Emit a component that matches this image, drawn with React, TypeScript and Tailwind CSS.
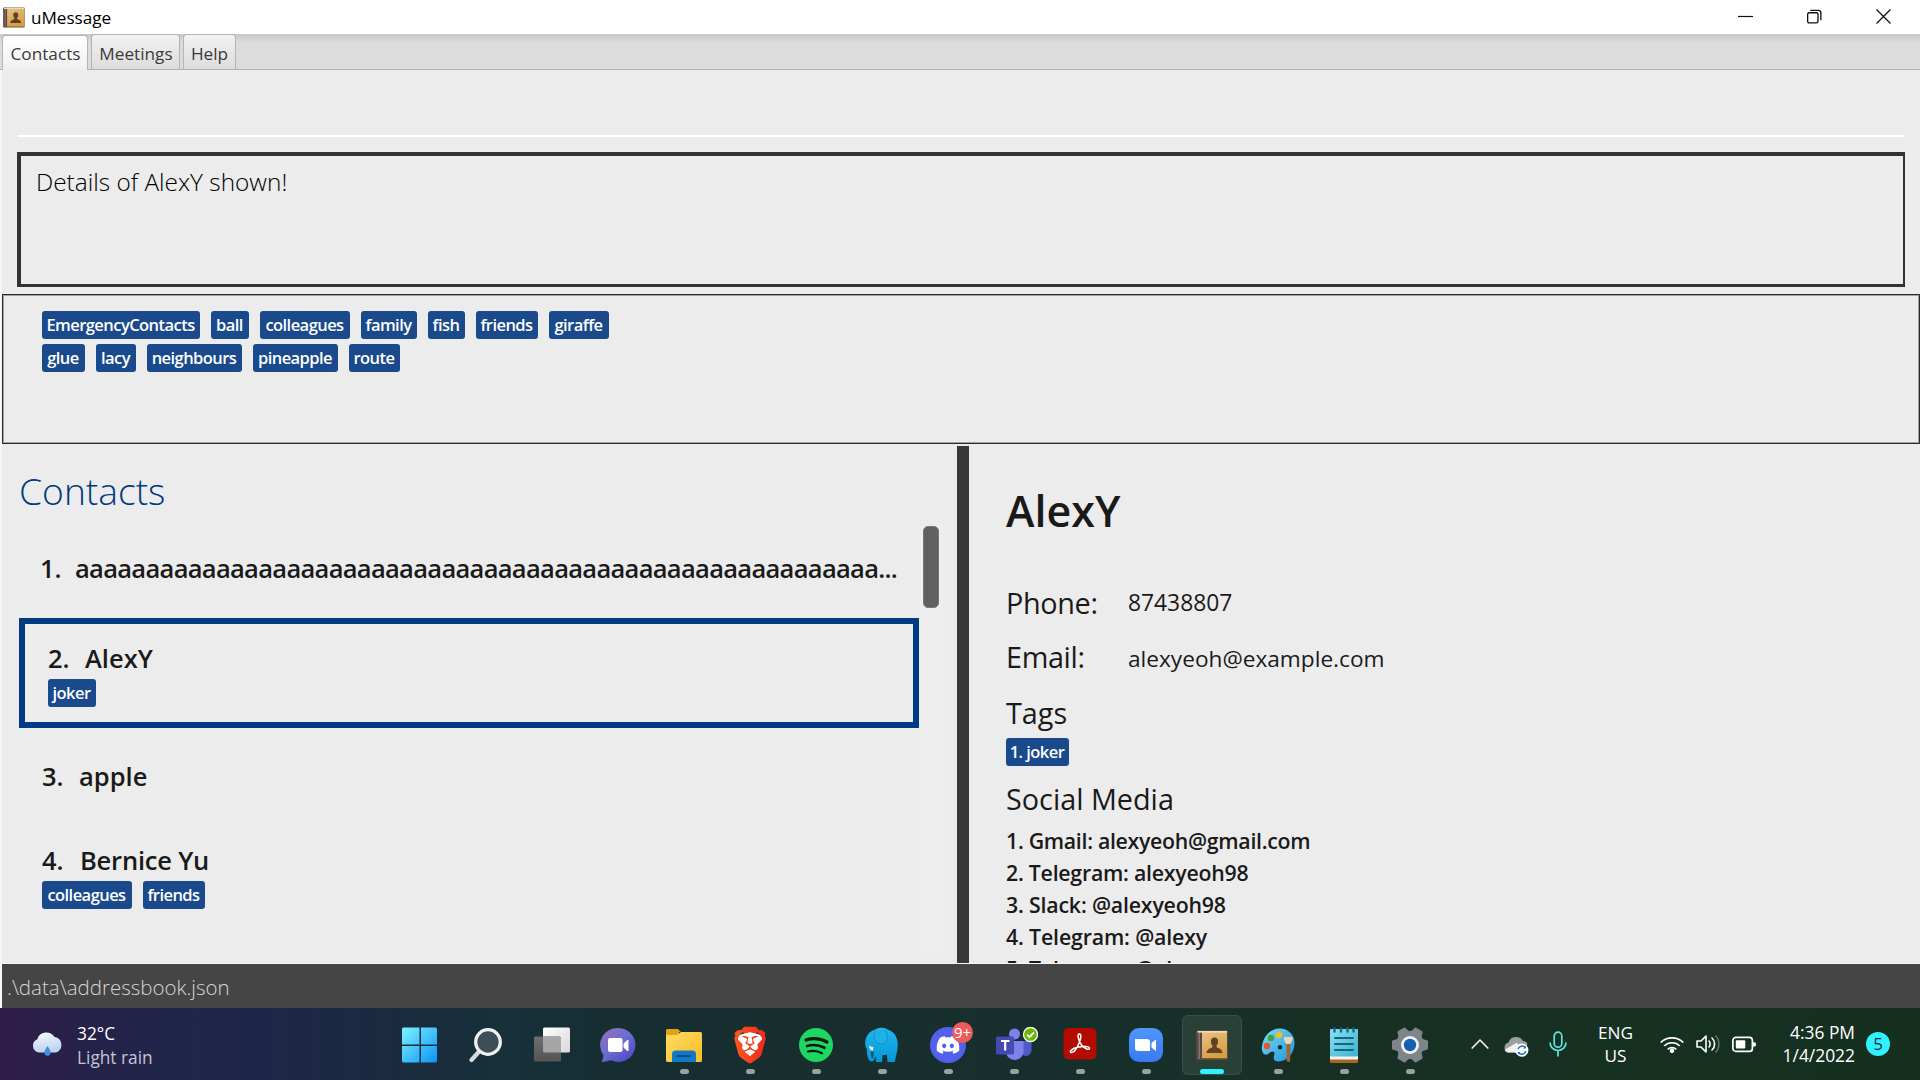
import type { ReactNode } from "react";
import { SiBrave, SiDiscord } from "react-icons/si";

function Tag({ label, width }: { label: string; width: string }) {
  return (
    <span
      className={`flex h-7 items-center justify-center rounded-[3px] bg-[#1a4a8c] pr-px text-[16.5px] font-semibold leading-7 tracking-[-0.55px] whitespace-nowrap text-white ${width}`}
    >
      {label}
    </span>
  );
}

function BookIcon({ className }: { className?: string }) {
  return (
    <svg viewBox="0 0 32 30" className={className}>
      <defs>
        <linearGradient id="bookCover" x1="0" y1="0" x2="0.4" y2="1">
          <stop offset="0" stopColor="#e6c184" />
          <stop offset="1" stopColor="#d79f45" />
        </linearGradient>
      </defs>
      <rect x="0.5" y="0.5" width="31" height="29" rx="1" fill="#7b5a33" />
      <rect x="0.5" y="1" width="5.5" height="28" fill="#5a4744" />
      <rect x="2.5" y="2" width="1.6" height="27" fill="#86736d" />
      <rect x="6" y="2" width="25" height="26" fill="url(#bookCover)" />
      <rect x="1.5" y="1" width="29.5" height="1.6" fill="#f0dcb8" />
      <path
        d="M18.5 7.5c2.5 0 3.8 1.8 3.6 4.4-.2 1.9-.9 3-1.6 3.8v1.6c1.5.9 5.5 1.5 6 5.7H10.5c.5-4.2 4.5-4.8 6-5.7v-1.6c-.7-.8-1.4-1.9-1.6-3.8-.2-2.6 1.1-4.4 3.6-4.4z"
        fill="#5f4322"
      />
    </svg>
  );
}

function TitleBar() {
  return (
    <header className="flex h-[34px] items-center bg-white pl-[3px] pr-[29px] text-black">
      <BookIcon className="h-[21px] w-[22px]" />
      <span className="ml-[6px] pt-[2px] text-[17.1px] leading-[30px]">uMessage</span>
      <div className="ml-auto flex gap-[54px] pb-px">
        <svg width="15" height="15" viewBox="0 0 15 15">
          <path d="M0 7.5h15" stroke="#111" strokeWidth="1.2" />
        </svg>
        <svg width="15" height="15" viewBox="0 0 16 15" fill="none" stroke="#111" strokeWidth="1.4">
          <rect x="0.7" y="3.5" width="11" height="10.8" rx="1.5" />
          <path d="M3.500 1h8.500a2.800 2.800 0 0 1 2.800 2.800v7.700" />
        </svg>
        <svg width="15" height="15" viewBox="0 0 15 15">
          <path d="M0.5 0.5l14 14M14.5 0.5l-14 14" stroke="#111" strokeWidth="1.3" />
        </svg>
      </div>
    </header>
  );
}

function TabBar() {
  const base =
    "flex h-[35px] items-center justify-center rounded-t-[4px] border border-b-0 border-[#b4b4b4] text-[17.2px] leading-[30px] text-[#3a3a3a]";
  return (
    <nav className="flex h-9 items-end border-b border-[#b2b2b2] bg-linear-to-b from-[#c8c8c8] via-[#dcdcdc] via-25% to-[#dcdcdc] pl-[2px]">
      <div className={`${base} -mb-px h-9 w-[86px] bg-linear-to-b from-white to-[#f0f0f0] pt-[2px] pl-px`}>Contacts</div>
      <div className={`${base} ml-[3px] w-[89px] bg-linear-to-b from-[#f3f3f3] to-[#dcdcdc] pt-[3px] pl-px`}>Meetings</div>
      <div className={`${base} ml-[3px] w-[53px] bg-linear-to-b from-[#f3f3f3] to-[#dcdcdc] pt-[3px]`}>Help</div>
    </nav>
  );
}

const allTags: [string, string][] = [
  ["EmergencyContacts", "w-[158px]"],
  ["ball", "w-[38px]"],
  ["colleagues", "w-[90px]"],
  ["family", "w-[56px]"],
  ["fish", "w-[37px]"],
  ["friends", "w-[62px]"],
  ["giraffe", "w-[60px]"],
  ["glue", "w-[43px]"],
  ["lacy", "w-[40px]"],
  ["neighbours", "w-[95px]"],
  ["pineapple", "w-[85px]"],
  ["route", "w-[51px]"],
];

function ContactsPane() {
  const name = "text-[25.5px] font-semibold leading-9 whitespace-nowrap";
  return (
    <section className="flex w-[955px] flex-col pl-[17px]">
      <h1 className="mt-[27px] h-10 text-[37.2px] font-light leading-10 text-[#003a80]">Contacts</h1>
      <div className="mt-[15px] flex flex-1">
        <div className="w-[900px] text-[#1a1a1a]">
          <div className="flex h-[92px] pl-[21px] pt-6">
            <span className={`${name} w-[35px]`}>1.</span>
            <span className={`${name} tracking-[-0.7px]`}>{"a".repeat(57)}...</span>
          </div>
          <div className="h-[110px] border-6 border-[#003b84] pl-[23px] pt-4">
            <div className="flex">
              <span className={`${name} w-[37px]`}>2.</span>
              <span className={name}>AlexY</span>
            </div>
            <div className="mt-[3px] flex">
              <Tag label="joker" width="w-12" />
            </div>
          </div>
          <div className="flex h-[84px] pl-[23px] pt-[30px]">
            <span className={`${name} w-[37px]`}>3.</span>
            <span className={name}>apple</span>
          </div>
          <div className="pl-[23px] pt-[30px]">
            <div className="flex">
              <span className={`${name} w-[38px]`}>4.</span>
              <span className={`${name} tracking-[-0.2px]`}>Bernice Yu</span>
            </div>
            <div className="mt-[3px] flex gap-[11px]">
              <Tag label="colleagues" width="w-[90px]" />
              <Tag label="friends" width="w-[62px]" />
            </div>
          </div>
        </div>
        <div className="mb-3 w-6 bg-[#eeeeee] pl-1">
          <div className="h-[82px] w-4 rounded-[5px] border border-[#777] bg-[#606060]" />
        </div>
      </div>
    </section>
  );
}

const socials: [string, string][] = [
  ["1. Gmail: alexyeoh@gmail.com", "tracking-[-0.3px]"],
  ["2. Telegram: alexyeoh98", "tracking-[-0.24px]"],
  ["3. Slack: @alexyeoh98", "tracking-[-0.18px]"],
  ["4. Telegram: @alexy", "tracking-[-0.15px]"],
  ["5. Telegram: @alexy", "tracking-[-0.15px]"],
];

function DetailsPane() {
  const label = "text-[28.8px] leading-10";
  return (
    <section className="flex-1 pl-[37px] pt-[37px] text-[#1a1a1a]">
      <h2 className="text-[43px] font-semibold leading-[60px]">AlexY</h2>
      <div className="mt-[42px] flex">
        <span className={`${label} w-[122px] tracking-[-0.35px]`}>Phone:</span>
        <span className="text-[22.8px] leading-[39px]">87438807</span>
      </div>
      <div className="mt-[14px] flex">
        <span className={`${label} w-[122px] tracking-[-0.35px]`}>Email:</span>
        <span className="pt-[2px] text-[22.65px] leading-10">alexyeoh@example.com</span>
      </div>
      <div className={`${label} mt-[14px]`}>Tags</div>
      <div className="mt-[5px] flex">
        <Tag label="1. joker" width="w-[63px]" />
      </div>
      <div className={`${label} mt-[13px]`}>Social Media</div>
      <div className="mt-[6px] text-[21.3px] font-semibold leading-8">
        {socials.map(([text, tracking]) => (
          <div key={text} className={tracking}>
            {text}
          </div>
        ))}
      </div>
    </section>
  );
}

function Slot({ children, active, dot = true }: { children: ReactNode; active?: boolean; dot?: boolean }) {
  return (
    <div
      className={`relative flex h-[60px] w-[60px] justify-center rounded-[6px] pt-[6px] ${
        active ? "bg-white/8 ring-1 ring-inset ring-white/8" : ""
      }`}
    >
      {children}
      {dot && (
        <span
          className={`absolute bottom-px h-[5px] rounded-full ${active ? "w-6 bg-[#30f2ff]" : "w-[9px] bg-[#98a29f]"}`}
        />
      )}
    </div>
  );
}

const box = { width: 48, height: 48, viewBox: "0 0 48 48" };

function TaskIcons() {
  return (
    <div className="flex gap-[6px] pt-px">
      <Slot dot={false}>
        <svg {...box}>
          <defs>
            <linearGradient id="win" x1="0" y1="0" x2="1" y2="1">
              <stop offset="0" stopColor="#7df3ff" />
              <stop offset="1" stopColor="#0a94f5" />
            </linearGradient>
            <mask id="panes">
              <path d="M6 6h17.500v17.500H6zM25 6h17v17.500H25zM6 25h17.500v17H6zM25 25h17v17H25z" fill="#fff" />
            </mask>
          </defs>
          <rect x="6" y="6.5" width="35" height="35" rx="1.5" fill="url(#win)" mask="url(#panes)" />
        </svg>
      </Slot>
      <Slot dot={false}>
        <svg {...box}>
          <path d="M17.5 30L9.5 39" stroke="#d5dadd" strokeWidth="4.2" strokeLinecap="round" />
          <circle cx="26" cy="21" r="12.3" fill="#3c4f59" stroke="#f0f2f3" strokeWidth="3.3" />
        </svg>
      </Slot>
      <Slot dot={false}>
        <svg {...box}>
          <defs>
            <linearGradient id="tv" x1="0" y1="0" x2="1" y2="1">
              <stop offset="0" stopColor="#fff" />
              <stop offset="1" stopColor="#d8d8d8" />
            </linearGradient>
            <linearGradient id="tvBack" x1="0" y1="0" x2="0" y2="1">
              <stop offset="0" stopColor="#6d6d6d" />
              <stop offset="1" stopColor="#555" />
            </linearGradient>
          </defs>
          <rect x="15" y="6.5" width="27" height="25" rx="1.5" fill="url(#tv)" />
          <rect x="6" y="15.5" width="27" height="25" rx="1.5" fill="url(#tvBack)" />
          <path d="M15 15.5h16.5q1.5 0 1.5 1.5V31.5H16.5q-1.5 0-1.5-1.5z" fill="#a5a5a5" />
        </svg>
      </Slot>
      <Slot dot={false}>
        <svg {...box}>
          <defs>
            <linearGradient id="chat" x1="0" y1="0" x2="0.8" y2="1">
              <stop offset="0" stopColor="#9b6cb8" />
              <stop offset="0.5" stopColor="#6d6fd0" />
              <stop offset="1" stopColor="#5148c4" />
            </linearGradient>
          </defs>
          <path d="M24.5 7a17 17 0 1 1-7.5 32.3c-2.8.9-6.5 1.7-9.5 1.6 1.3-2.3 1.9-4.7 1.9-6.9A17 17 0 0 1 24.5 7z" fill="url(#chat)" />
          <rect x="14" y="17" width="14.5" height="14" rx="2" fill="#fff" />
          <path d="M30 22.5l4-3.5v11l-4-3.5z" fill="#fff" stroke="#fff" strokeLinejoin="round" />
        </svg>
      </Slot>
      <Slot>
        <svg {...box}>
          <defs>
            <linearGradient id="folder" x1="0" y1="0" x2="1" y2="1">
              <stop offset="0" stopColor="#ffdc62" />
              <stop offset="1" stopColor="#fbbc26" />
            </linearGradient>
          </defs>
          <path d="M6 9.5Q6 8 7.5 8H18l3 3h-2v5H6z" fill="#e2a118" />
          <path d="M6 14h11l4-3h19.5q1.5 0 1.5 1.5V39.5q0 1.5-1.5 1.5h-33Q6 41 6 39.5z" fill="url(#folder)" />
          <path d="M12 41V33q0-3.5 3.5-3.5h17q3.5 0 3.5 3.5v8z" fill="#1279c4" />
          <path d="M17.5 35h13" stroke="#0a4f8c" strokeWidth="1.8" strokeLinecap="round" />
        </svg>
      </Slot>
      <Slot>
        <svg {...box}>
          <defs>
            <linearGradient id="brave" x1="0" y1="0" x2="1" y2="0">
              <stop offset="0" stopColor="#f9561f" />
              <stop offset="1" stopColor="#f02a1c" />
            </linearGradient>
          </defs>
          <path d="M12 14.5l12-4 12 4 .5 9L31 34l-7 5-7-5-5.5-10.5z" fill="#fff" />
          <SiBrave x="5.5" y="5.5" width="37" height="37" size={37} fill="url(#brave)" />
        </svg>
      </Slot>
      <Slot>
        <svg {...box}>
          <circle cx="24" cy="24" r="17" fill="#1fd760" />
          <g fill="none" stroke="#0b1a12" strokeLinecap="round">
            <path d="M14 19c7-2.2 15-1.4 21 2" strokeWidth="3.2" />
            <path d="M15 25c6-1.7 12.5-1 17.5 1.8" strokeWidth="2.7" />
            <path d="M16 30.5c5-1.3 10-.7 14 1.7" strokeWidth="2.2" />
          </g>
        </svg>
      </Slot>
      <Slot>
        <svg {...box}>
          <defs>
            <linearGradient id="eleph" x1="0" y1="0" x2="0" y2="1">
              <stop offset="0" stopColor="#23b8ec" />
              <stop offset="1" stopColor="#0496d8" />
            </linearGradient>
          </defs>
          <path
            d="M17 8.8C19 7 21.5 6.6 24 6.7c2.5 0 4.5.8 6 2 5.8 1.8 9.5 7 9.7 13.8.1 4.500-.4 7.500-1.200 10.500L36.800 41h-7.300l-.6-7.500c-1.500.5-3 .6-4.400.4L24 41h-6l-.6-6c-.6 3-1.500 5.500-3.700 5.500-2.500 0-4-3-4.600-7.500-.3-2-.3-3.500-.2-5-1-1.200-1.800-3.300-1.700-6C7.500 15.500 11 10.300 17 8.800z"
            fill="url(#eleph)"
          />
          <path
            d="M17.5 9.5c-2 3-2.2 7.5 0 10.5 2.3 3 7.5 4 10.3 1 2-2.3 2.3-7-.8-12.5"
            fill="#1fb0e6"
            stroke="#0c86bd"
            strokeWidth="0.7"
          />
          <path d="M10.8 24.7l4.9 1.8-1.2 3.5c-1.8-.8-3.2-2.5-3.7-5.3z" fill="#e8f7fd" />
          <path d="M12.8 30.5c.1 3 .6 5.5 1.6 7.5 1.2-2 1.4-5 1-7.5z" fill="#0c4d6b" />
        </svg>
      </Slot>
      <Slot>
        <svg {...box}>
          <circle cx="24" cy="24" r="18" fill="#5360ee" />
          <SiDiscord x="12.5" y="12.5" size={23} fill="#fff" />
        </svg>
        <span className="absolute top-[7px] right-[5px] flex h-[21px] w-[21px] items-center justify-center rounded-full bg-[#ee5b5f] text-[15px] leading-[20px] text-white">
          9+
        </span>
      </Slot>
      <Slot>
        <svg {...box}>
          <circle cx="24.5" cy="13" r="5.5" fill="#7b83eb" />
          <path d="M33 20h8.5v9.5a5.5 5.5 0 0 1-8.5 4.5z" fill="#5059c9" />
          <path d="M16 20h17.5v12a9 9 0 0 1-17.5 0z" fill="#7b83eb" />
          <rect x="6" y="15.5" width="18" height="18" rx="1.5" fill="#4449b4" />
          <path d="M11 20h8.5M15.2 20v9.5" stroke="#fff" strokeWidth="2.2" />
          <circle cx="40.5" cy="13.5" r="7" fill="#6bb700" stroke="#f4f9ee" strokeWidth="1.4" />
          <path d="M37 13.7l2.5 2.5 4.5-4.8" stroke="#fff" strokeWidth="1.9" fill="none" />
        </svg>
      </Slot>
      <Slot>
        <svg {...box}>
          <rect x="7.5" y="7" width="33" height="31.5" rx="5" fill="#b30b00" />
          <path
            d="M23 13c2.5-.6 2.3 3.8.3 8.5-2 5-5.3 10-7.8 10-2.5-.3-.5-3.700 6-5.200 5-1.100 11.800-1.300 12 .9 0 2.200-4.500 1-8-3.200-2.600-3.200-4.600-10.300-2.500-11z"
            fill="none"
            stroke="#fff"
            strokeWidth="1.6"
          />
        </svg>
      </Slot>
      <Slot>
        <svg {...box}>
          <defs>
            <linearGradient id="zm" x1="0" y1="0" x2="0" y2="1">
              <stop offset="0" stopColor="#4f97fb" />
              <stop offset="1" stopColor="#3a78f2" />
            </linearGradient>
          </defs>
          <rect x="7" y="7" width="34" height="34" rx="10" fill="url(#zm)" />
          <path d="M13 18h12q3 0 3 3v9H16q-3 0-3-3z" fill="#fff" />
          <path d="M29.5 22l4.5-3.5v11.5l-4.5-3.5z" fill="#fff" />
        </svg>
      </Slot>
      <Slot active>
        <div className="pt-[9px]">
          <BookIcon className="h-[30px] w-[32px]" />
        </div>
      </Slot>
      <Slot>
        <svg {...box}>
          <defs>
            <linearGradient id="pal" x1="0" y1="0" x2="1" y2="1">
              <stop offset="0" stopColor="#7fdcf8" />
              <stop offset="1" stopColor="#1a94dc" />
            </linearGradient>
          </defs>
          <path
            d="M25 7.5c9-.3 15.5 6 15.5 14.5 0 10-7 18.5-16 18.5-4 0-5.5-2.5-4.5-5.5s.5-5-2-4.5-4 4-7 3c-3-1-4-5.5-2.5-11C10.5 14 17 7.8 25 7.5zm1 16.500a2.300 2.300 0 1 0 .1 4.600A2.300 2.300 0 0 0 26 24z"
            fill="url(#pal)"
            fillRule="evenodd"
          />
          <circle cx="13" cy="25" r="3.2" fill="#e8532a" />
          <circle cx="17" cy="17" r="3.2" fill="#3fa33a" />
          <circle cx="25" cy="14" r="3.2" fill="#f7bb1d" />
          <path d="M32.5 23h4l-.3 17q-1.7 2-3.4 0z" fill="#a7632b" />
          <path d="M30 16h8.5q.5 4-2.5 7h-3.5q-3-3-2.5-7z" fill="#efd3b4" />
        </svg>
      </Slot>
      <Slot>
        <svg {...box}>
          <defs>
            <linearGradient id="note" x1="0" y1="0" x2="1" y2="1">
              <stop offset="0" stopColor="#8be0f0" />
              <stop offset="1" stopColor="#3eb1cf" />
            </linearGradient>
          </defs>
          <rect x="10" y="36" width="28" height="6" rx="1" fill="#b0621c" />
          <rect x="10" y="34" width="28" height="4.5" fill="#f3f3f3" />
          <rect x="10" y="8" width="28" height="27.5" rx="1" fill="url(#note)" />
          <path d="M15 17h18M15 23h18M15 29h18" stroke="#14667f" strokeWidth="2" strokeLinecap="round" />
          <path d="M14.5 7.5v3M21 7.5v3M27.5 7.5v3M33.5 7.5v3" stroke="#17698c" strokeWidth="2.4" strokeLinecap="round" />
        </svg>
      </Slot>
      <Slot>
        <svg {...box}>
          <g fill="#7d858b">
            <circle cx="24" cy="24" r="14" />
            {[0, 60, 120, 180, 240, 300].map((a) => (
              <path
                key={a}
                d="M38 18.5l3 .8q1 .3 1 1.5v6.4q0 1.2-1 1.5l-3 .8-4 2V16.5z"
                transform={`rotate(${a} 24 24)`}
              />
            ))}
          </g>
          <circle cx="24" cy="24" r="9" fill="#f2f2f2" />
          <circle cx="24" cy="24" r="6.2" fill="#1260b0" />
        </svg>
      </Slot>
    </div>
  );
}

function Tray() {
  return (
    <div className="ml-auto flex h-[72px] items-center pr-[30px] text-white">
      <svg width="18" height="12" viewBox="0 0 18 12">
        <path d="M0.7 10.5L9 2l8.3 8.5" stroke="#fff" strokeWidth="1.5" fill="none" />
      </svg>
      <svg width="25" height="22" viewBox="0 0 25 22" className="ml-[15px] mt-1">
        <path d="M.5 13.5c0 2.5 1.7 4 4.2 4H17l6.5-8C23 7.5 21.5 6 19 6A8 8 0 0 0 4.5 7.5 5.8 5.8 0 0 0 .5 13.5z" fill="#9aa19d" />
        <path d="M1 14.5L13 7.5l4 10H4.7C2.5 17.5 1 16.5 1 14.5z" fill="#f0f1f0" />
        <circle cx="17.8" cy="15.2" r="6.6" fill="#fff" />
        <path d="M14 14.2a4 4 0 0 1 7.2-1.4M21.7 16.2a4 4 0 0 1-7.2 1.4" stroke="#1b6fc4" strokeWidth="1.5" fill="none" />
        <path d="M21.8 10.8v2.7h-2.7zM13.8 19.6v-2.7h2.7z" fill="#1b6fc4" />
      </svg>
      <svg width="18" height="26" viewBox="0 0 18 26" className="ml-[20px]" fill="none" stroke="#5ce6e0" strokeWidth="1.7">
        <rect x="5.2" y="1.2" width="7.6" height="15" rx="3.8" />
        <path d="M1 11.5a8 8 0 0 0 16 0M9 19.5v6" />
      </svg>
      <div className="ml-[28px] w-[41px] text-center text-[17.2px] leading-[23px]">
        <div>ENG</div>
        <div>US</div>
      </div>
      <svg width="24" height="18" viewBox="0 0 24 18" className="ml-6" fill="none" stroke="#fff" strokeWidth="1.7">
        <path d="M0.7 7.5a16 16 0 0 1 22.6 0M4.2 11a11 11 0 0 1 15.6 0M7.7 14.3a6.2 6.2 0 0 1 8.6 0" />
        <circle cx="12" cy="15.8" r="1.4" fill="#fff" />
      </svg>
      <svg width="24" height="20" viewBox="0 0 24 20" className="ml-3" fill="none" stroke="#fff" strokeWidth="1.6">
        <path d="M1 7h4l5-5v16l-5-5H1z" strokeLinejoin="round" />
        <path d="M13 7c1.5 1.5 1.5 4.5 0 6M16 4c3.5 3 3.5 9 0 12" strokeLinecap="round" />
        <path d="M19.5 1.5c4.5 4.5 4.5 12.5 0 17" stroke="#5f7266" />
      </svg>
      <svg width="24" height="17" viewBox="0 0 24 17" className="ml-3">
        <rect x="0.9" y="1.4" width="19.5" height="14" rx="3" fill="none" stroke="#fff" strokeWidth="1.7" />
        <rect x="3.8" y="4.3" width="9.5" height="8.2" rx="1" fill="#fff" />
        <path d="M21 6.2h1.5q1.5 0 1.5 2.2t-1.5 2.2H21z" fill="#fff" />
      </svg>
      <div className="ml-5 w-20 pr-px text-right text-[17.4px] leading-[23px]">
        <div>4:36 PM</div>
        <div>1/4/2022</div>
      </div>
      <div className="ml-[10px] flex h-6 w-6 items-center justify-center rounded-full bg-[#30f2ff] text-[17px] leading-6 text-[#12303a]">
        5
      </div>
    </div>
  );
}

function Weather() {
  return (
    <div className="flex w-[390px] items-center pl-[31px]">
      <svg width="33" height="26" viewBox="0 0 33 26">
        <defs>
          <linearGradient id="cloud" x1="0" y1="0" x2="0.3" y2="1">
            <stop offset="0" stopColor="#fbfcfe" />
            <stop offset="1" stopColor="#bcd4ee" />
          </linearGradient>
        </defs>
        <path d="M7.5 21.5A7 7 0 0 1 6.3 8.2 9.5 9.5 0 0 1 23.5 6 8 8 0 0 1 25 21.5z" fill="url(#cloud)" />
        <path d="M16.5 15c2 3 3 4.8 3 6.7a3 3 0 0 1-6 0c0-1.9 1-3.7 3-6.7z" fill="#3d8fe0" />
      </svg>
      <div className="ml-[13px] pt-[3px] text-[17.3px] leading-[24px]">
        <div className="text-white">32°C</div>
        <div className="text-[#c3c5d2]">Light rain</div>
      </div>
    </div>
  );
}

export default function App() {
  return (
    <div
      className="flex h-[1080px] w-[1920px] flex-col overflow-hidden bg-[#f7f7f7]"
      style={{ fontFamily: '"Open Sans", "Noto Sans", sans-serif' }}
    >
      <TitleBar />
      <TabBar />
      <main className="ml-[2px] flex h-[893px] flex-col bg-[#ececec]">
        <div className="ml-4 mr-[15px] h-[67px] shrink-0 border-b-2 border-white" />
        <div className="mt-[15px] ml-[15px] mr-[15px] h-[135px] shrink-0 border-t-4 border-r-2 border-b-3 border-l-4 border-[#333333] pt-[9px] pl-[15px] text-[24.4px] font-light leading-[34px] text-black">
          Details of AlexY shown!
        </div>
        <div className="mt-[7px] h-[150px] shrink-0 border border-[#2b2b2b] pl-[39px] pt-4 ring-1 ring-inset ring-[#a0a0a0]">
          <div className="flex w-[600px] flex-wrap gap-x-[11px] gap-y-[5px]">
            {allTags.map(([label, width]) => (
              <Tag key={label} label={label} width={width} />
            ))}
          </div>
        </div>
        <div className="flex h-[519px] shrink-0 overflow-hidden">
          <ContactsPane />
          <div className="mt-[2px] w-3 bg-[#383838]" />
          <DetailsPane />
        </div>
      </main>
      <div className="mt-px ml-[2px] h-11 bg-[#454545] pl-[5px] pt-[6px] text-[20.5px] font-light leading-[34px] text-[#d6d6d6]">
        .\data\addressbook.json
      </div>
      <footer className="flex h-[72px] items-center bg-[linear-gradient(90deg,#2f1d48_0%,#23234a_6%,#1e2648_13%,#1a2a40_20%,#17303a_26%,#162e30_33%,#172f2c_55%,#173024_72%,#15301f_100%)]">
        <Weather />
        <TaskIcons />
        <Tray />
      </footer>
    </div>
  );
}
